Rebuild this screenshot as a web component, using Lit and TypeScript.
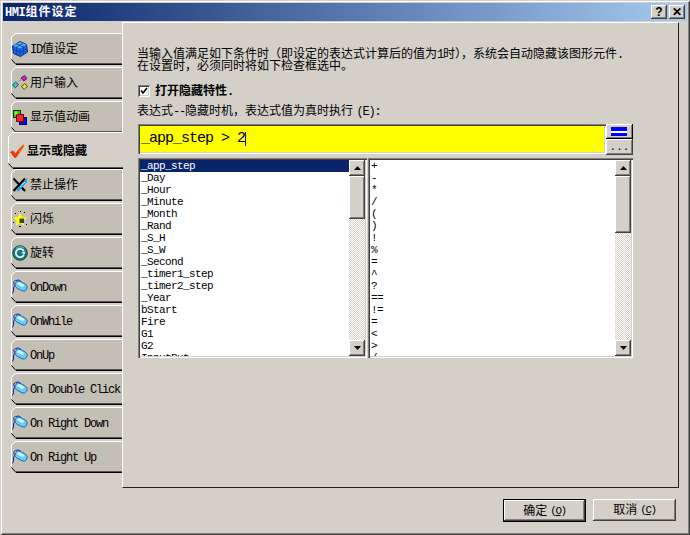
import { LitElement, html, css, svg } from "lit";
import { customElement } from "lit/decorators.js";

const pill = svg`
  <path d="M3 1.5 Q0.5 3 2.5 6 Q1 9 1.5 12 M1.5 12 L0.5 14.5" fill="none" stroke="#1020a0" stroke-width="1"/>
  <path d="M3.5 1.5 Q7 0 9 2.5" fill="none" stroke="#1020a0" stroke-width="1"/>
  <rect x="2.6" y="3.2" width="13" height="7.6" rx="3.8" transform="rotate(28 9 7)" fill="#68ccfa" stroke="#1060b0" stroke-width=".8"/>
  <rect x="5" y="4.4" width="7" height="2.8" rx="1.4" transform="rotate(28 9 6)" fill="#dcf6ff"/>`;

const icons: Record<string, unknown> = {
  cube: svg`
    <path d="M8 .5 L14.5 3.5 L15.5 11 L8.5 15.5 L1.5 12.5 L.5 5 Z" fill="#1a66e0" stroke="#0a2a80"/>
    <path d="M1 4.5 L8 1 L14.5 3.8 L8 7.5 Z" fill="#58b0f8"/>
    <path d="M8 7.5 V15 M1 8 L8 11 L15 8 M4.5 6 V14 M11.5 5.5 V13.5 M4.5 3 L11.5 6 M11 2.5 L4.5 6" fill="none" stroke="#0a3aa0" stroke-width=".8"/>`,
  keys: svg`
    <path d="M9 3 L12.5 .5 L15 3.5 L11.8 6 Z" fill="#e818c8" stroke="#202020" stroke-width=".8"/>
    <path d="M.5 10 L3.6 7 L6.5 9.8 L3.4 12.8 Z" fill="#18d8d8" stroke="#202020" stroke-width=".8"/>
    <path d="M9.5 11.8 L12.6 8.6 L15.5 11.2 L12.4 14.5 Z" fill="#f0e818" stroke="#202020" stroke-width=".8"/>
    <path d="M6.5 6.5 L9 4.5" stroke="#808080"/>`,
  squares: svg`
    <rect x="1.5" y="1.5" width="7" height="7" fill="#30c020" stroke="#104000"/>
    <rect x="7.5" y="8.5" width="7" height="7" fill="#1010d0" stroke="#000060"/>
    <rect x="4.5" y="5.5" width="7" height="7" fill="#f02828" stroke="#800000"/>
    <rect x="2.5" y="2.5" width="3" height="3" fill="#80f060"/>`,
  check: svg`
    <path d="M1 9 L4 7.5 L6.5 10.5 Q10 5 14 1.5 L15.5 3 Q11 9 7 15 L5.5 15 Z" fill="#f03808"/>
    <path d="M9 7 L14 2 M10 9 L15 3" stroke="#f8a030" stroke-width="1" stroke-dasharray="2 1"/>`,
  ban: svg`
    <path d="M1.5 1.5 L13 14 M13 1.5 L1.5 14" stroke="#000" stroke-width="2"/>
    <path d="M5 12 L13 3.5 L15.5 1 L15 5 L8 13 L5.5 15 Z" fill="#20a0f0"/>
    <path d="M8 10 L13 5" stroke="#a0e8ff"/>`,
  star: svg`
    <path d="M8 1.5 L10 6 L15 6.5 L11 10 L12.5 15 L8 12 L3.5 15 L5 10 L1 6.5 L6 6 Z" fill="#ffff00"/>
    <path d="M7.5 7.5 H12 V12 H7.5 Z" fill="#202020" opacity=".85"/>
    <path d="M3 2.5h1 M12 1.5h1 M1 11.5h1 M14 13.5h1 M8 .5h1 M7 15.5h2" stroke="#000"/>`,
  spin: svg`
    <circle cx="8" cy="8" r="7.3" fill="#157a80" stroke="#0c4c50"/>
    <path d="M4 3.5 A6 6 0 0 1 12 3" fill="none" stroke="#70c8c8" stroke-width="1"/>
    <path d="M12 6.5 A4.2 4.2 0 1 0 11.8 10" fill="none" stroke="#e8f4f4" stroke-width="1.8"/>
    <path d="M13.5 7 L9.5 7 L12 10 Z" fill="#e8f4f4"/>`,
  pill,
};

interface Tab { icon: string; label: unknown; active?: boolean }

const m = (s: string) => html`<span class="m">${s}</span>`;

const tabs: Tab[] = [
  { icon: "cube", label: html`${m("ID")}值设定` },
  { icon: "keys", label: "用户输入" },
  { icon: "squares", label: "显示值动画" },
  { icon: "check", label: "显示或隐藏", active: true },
  { icon: "ban", label: "禁止操作" },
  { icon: "star", label: "闪烁" },
  { icon: "spin", label: "旋转" },
  { icon: "pill", label: m("OnDown") },
  { icon: "pill", label: m("OnWhile") },
  { icon: "pill", label: m("OnUp") },
  { icon: "pill", label: m("On Double Click") },
  { icon: "pill", label: m("On Right Down") },
  { icon: "pill", label: m("On Right Up") },
];

const leftItems = ["_app_step", "_Day", "_Hour", "_Minute", "_Month", "_Rand", "_S_H", "_S_W", "_Second", "_timer1_step", "_timer2_step", "_Year", "bStart", "Fire", "G1", "G2", "InputBut"];
const rightItems = ["+", "-", "*", "/", "(", ")", "!", "%", "=", "^", "?", "==", "!=", "=", "<", ">", "/"];

@customElement("app-root")
export class AppRoot extends LitElement {
  static styles = css`
    :host {
      display: block;
      width: 690px;
      height: 535px;
      font-family: "Liberation Sans", "Noto Sans CJK SC", sans-serif;
      font-size: 12px;
      line-height: 12px;
      color: #000;
    }
    * { box-sizing: border-box; }
    .m {
      font-family: "Liberation Mono", monospace;
      font-size: 12px;
      letter-spacing: -1.2px;
    }
    .window {
      width: 690px;
      height: 535px;
      padding: 3px;
      display: flex;
      flex-direction: column;
      background: #d4d0c8;
      box-shadow: inset 1px 1px #d4d0c8, inset -1px -1px #404040, inset 2px 2px #fff, inset -2px -2px #808080;
    }
    .title {
      height: 18px;
      flex: none;
      display: flex;
      align-items: center;
      justify-content: space-between;
      padding: 0 2px;
      background: linear-gradient(90deg, #0a246a, #a6caf0);
      color: #fff;
      font-weight: 700;
      letter-spacing: 1px;
    }
    .title .m { letter-spacing: -0.4px; }
    .title-btns { display: flex; gap: 2px; }
    .tbtn {
      width: 16px;
      height: 14px;
      background: #d4d0c8;
      color: #000;
      font: 700 12px/14px "Liberation Sans", sans-serif;
      letter-spacing: 0;
      text-align: center;
      box-shadow: inset -1px -1px #404040, inset 1px 1px #fff, inset -2px -2px #808080;
    }
    .body { display: flex; margin-top: 1px; flex: none; height: 466px; }
    .side {
      flex: none;
      padding-top: 11px;
      position: relative;
      z-index: 1;
      margin-right: -1px;
      width: 120px;
    }
    .tab {
      display: grid;
      width: 111px;
      height: 34px;
      margin-left: 8px;
    }
    .tab > * { grid-area: 1 / 1; }
    .tab.active {
      width: 115px;
      height: 39px;
      margin: -3px 0 -2px 5px;
      position: relative;
      z-index: 1;
    }
    .tab-bg { width: 100%; height: 100%; display: block; }
    .tab-content {
      display: flex;
      align-items: center;
      height: 32px;
      padding-left: 1px;
      gap: 2px;
      white-space: nowrap;
    }
    .tab.active .tab-content { height: 37px; font-weight: 700; }
    .tab-icon { width: 16px; height: 16px; flex: none; display: block; }
    .panel {
      width: 557px;
      flex: none;
      padding: 25px 0 0 14px;
      border-top: 1px solid #fff;
      border-left: 1px solid #fff;
      border-right: 1px solid #202020;
      border-bottom: 1px solid #202020;
    }
    .desc { white-space: nowrap; height: 12px; }
    .check-row { display: flex; align-items: center; gap: 5px; margin: 13px 0 0 1px; height: 12px; font-weight: 700; }
    .check {
      width: 12px;
      height: 12px;
      background: #fff;
      box-shadow: inset 1px 1px #808080, inset -1px -1px #fff, inset 2px 2px #404040, inset -2px -2px #d4d0c8;
    }
    .check svg { display: block; }
    .expr-label { margin-top: 7px; height: 12px; line-height: 14px; white-space: nowrap; }
    .edit-row { display: flex; margin: 8px 0 0 1px; width: 495px; }
    .edit {
      flex: none;
      width: 468px;
      height: 30px;
      background: #ff0;
      display: flex;
      align-items: center;
      padding-left: 3px;
      font: 15px/16px "Liberation Mono", monospace;
      letter-spacing: -1px;
      box-shadow: inset 1px 1px #808080, inset 2px 2px #404040, inset -1px -1px #fff, inset -2px -2px #d4d0c8;
    }
    .caret { display: inline-block; width: 1px; height: 14px; background: #00f; }
    .edit-btns { flex: 1; display: flex; flex-direction: column; }
    .raised {
      background: #d4d0c8;
      box-shadow: inset -1px -1px #404040, inset 1px 1px #fff, inset -2px -2px #808080;
    }
    .eq { height: 15px; display: flex; flex-direction: column; justify-content: center; align-items: center; padding-right: 1px;
      box-shadow: inset -1px -1px #000, inset 1px 1px #fff, inset -2px -2px #808080; background: #d4d0c8; }
    .eq i { display: block; width: 16px; height: 4px; background: #00f; }
    .eq i + i { border-top: 2px solid #fff; height: 5px; }
    .dots { height: 16px; display: flex; justify-content: center; align-items: flex-end; padding-bottom: 3px; font: 11px/10px "Liberation Mono", monospace; }
    .lists { display: flex; gap: 1px; margin: 3px 0 0 1px; }
    .list {
      height: 200px;
      display: flex;
      padding: 2px;
      background: #fff;
      box-shadow: inset 1px 1px #808080, inset 2px 2px #404040, inset -1px -1px #fff, inset -2px -2px #d4d0c8;
    }
    .list.l { width: 229px; }
    .list.r { width: 265px; }
    .items {
      flex: 1;
      height: 196px;
      overflow: hidden;
      font: 11px/12px "Liberation Mono", monospace;
      letter-spacing: -0.6px;
    }
    .item { height: 12px; padding-left: 1px; white-space: pre; }
    .item.sel { background: #0a246a; color: #fff; }
    .sb { width: 16px; height: 196px; flex: none; display: flex; flex-direction: column; }
    .sb-btn { height: 16px; flex: none; display: flex; align-items: center; justify-content: center; }
    .sb-btn svg { display: block; }
    .thumb-s { height: 43px; flex: none; }
    .thumb-l { height: 57px; flex: none; }
    .track {
      flex: 1;
      background-color: #fff;
      background-image: repeating-conic-gradient(#d4d0c8 0 25%, #fff 0 50%);
      background-size: 2px 2px;
    }
    .footer { display: flex; justify-content: flex-end; gap: 7px; padding: 11px 11px 0 0; }
    .btn {
      width: 83px;
      height: 22px;
      display: flex;
      align-items: center;
      justify-content: center;
      gap: 3px;
      white-space: nowrap;
    }
    .btn .m { font-size: 11px; letter-spacing: -1.4px; }
    .btn.def {
      height: 23px;
      box-shadow: inset 0 0 0 1px #000, inset -2px -2px #404040, inset 2px 2px #fff, inset -3px -3px #808080;
      background: #d4d0c8;
    }
    .btn u { text-decoration: underline; }
  `;

  private tab(t: Tab) {
    const w = t.active ? 115 : 111;
    const h = t.active ? 39 : 34;
    const fill = t.active ? "#d4d0c8" : "#c4bfb4";
    const left = 0.5;
    const bot = h - 3.5;
    return html`<div class="tab ${t.active ? "active" : ""}">
      <svg class="tab-bg" width=${w} height=${h} viewBox="0 0 ${w} ${h}" shape-rendering="crispEdges">
        <path d="M4 0 H${w} V${bot} H5 L0 ${bot - 4} V4 Z" fill=${fill}/>
        <path d="M${w} .5 H4.5 L3.5 1.5 L2.5 2.5 L1.5 3.5 L${left} 4.5 V${bot - 5}" fill="none" stroke="#fff"/>
        <path d="M${left} ${bot - 4} L5 ${bot + 1} H${w}" fill="none" stroke="#000" shape-rendering="auto"/>
        <path d="M5 ${bot} H${w}" stroke="#555"/>
        <path d="M5.5 ${bot + 1} H${w}" stroke="#000"/>
      </svg>
      <div class="tab-content">
        <svg class="tab-icon" viewBox="0 0 16 16">${icons[t.icon]}</svg>
        <span>${t.label}</span>
      </div>
    </div>`;
  }

  private scrollbar(thumb: string) {
    return html`<div class="sb">
      <div class="sb-btn raised"><svg width="7" height="4" viewBox="0 0 7 4"><path d="M3.5 0 L7 4 H0 Z"/></svg></div>
      <div class="raised ${thumb}"></div>
      <div class="track"></div>
      <div class="sb-btn raised"><svg width="7" height="4" viewBox="0 0 7 4"><path d="M0 0 H7 L3.5 4 Z"/></svg></div>
    </div>`;
  }

  render() {
    return html`<div class="window">
      <div class="title">
        <span>${m("HMI")}组件设定</span>
        <div class="title-btns">
          <div class="tbtn">?</div>
          <div class="tbtn">✕</div>
        </div>
      </div>
      <div class="body">
        <div class="side">${tabs.map((t) => this.tab(t))}</div>
        <div class="panel">
          <div class="desc">当输入值满足如下条件时（即设定的表达式计算后的值为${m("1")}时），系统会自动隐藏该图形元件${m(".")}</div>
          <div class="desc">在设置时，必须同时将如下检查框选中。</div>
          <div class="check-row">
            <div class="check"><svg width="12" height="12" viewBox="0 0 12 12"><path d="M3 5.5 L5 8 L9 3" fill="none" stroke="#000" stroke-width="1.6"/></svg></div>
            <span>打开隐藏特性${m(".")}</span>
          </div>
          <div class="expr-label">表达式${m("--")}隐藏时机，表达式值为真时执行 ${m("(E):")}</div>
          <div class="edit-row">
            <div class="edit"><span>_app_step &gt; 2</span><span class="caret"></span></div>
            <div class="edit-btns">
              <div class="eq"><i></i><i></i></div>
              <div class="dots raised">...</div>
            </div>
          </div>
          <div class="lists">
            <div class="list l">
              <div class="items">${leftItems.map((s, i) => html`<div class="item ${i === 0 ? "sel" : ""}">${s}</div>`)}</div>
              ${this.scrollbar("thumb-s")}
            </div>
            <div class="list r">
              <div class="items">${rightItems.map((s) => html`<div class="item">${s}</div>`)}</div>
              ${this.scrollbar("thumb-l")}
            </div>
          </div>
        </div>
      </div>
      <div class="footer">
        <div class="btn def"><span>确定</span><span class="m">(<u>O</u>)</span></div>
        <div class="btn raised"><span>取消</span><span class="m">(<u>C</u>)</span></div>
      </div>
    </div>`;
  }
}
